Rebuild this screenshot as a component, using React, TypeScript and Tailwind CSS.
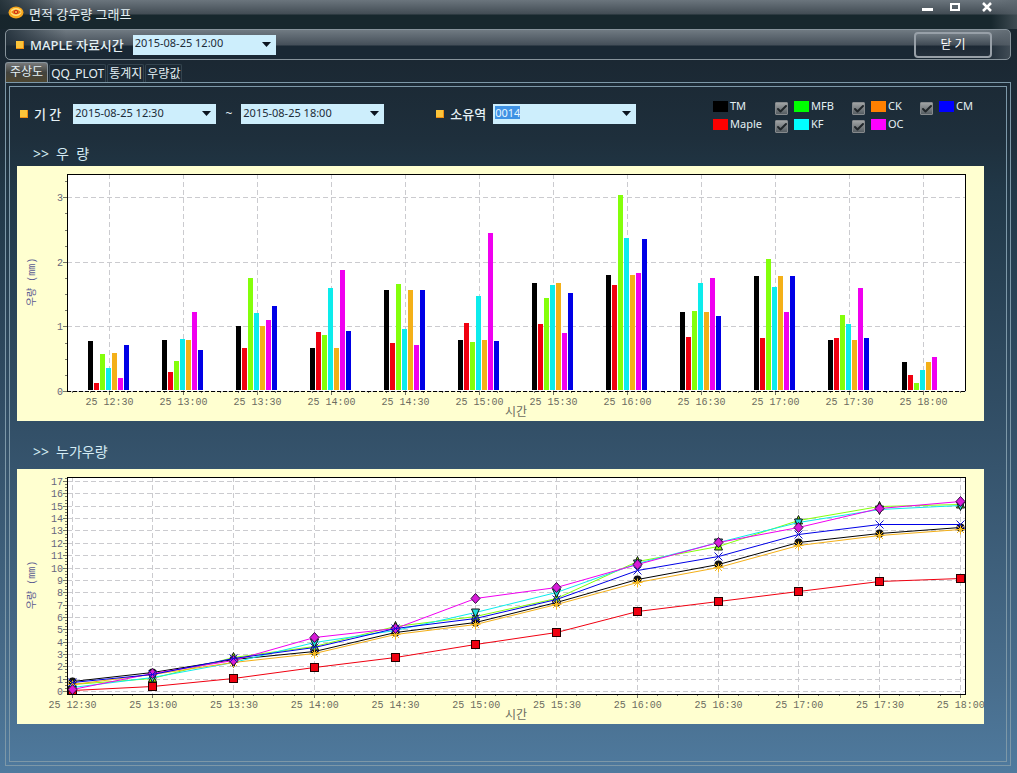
import { useState } from 'react'
import type { ReactNode } from 'react'
import { Check } from 'lucide-react'

type SeriesKey = 'TM' | 'Maple' | 'MFB' | 'KF' | 'CK' | 'OC' | 'CM'

interface Series {
  key: SeriesKey
  color: string
  values: number[]
}

const TIMES = [
  '12:30', '13:00', '13:30', '14:00', '14:30', '15:00',
  '15:30', '16:00', '16:30', '17:00', '17:30', '18:00',
]

const SERIES: Series[] = [
  { key: 'TM', color: '#000000', values: [0.77, 0.79, 1.0, 0.66, 1.56, 0.79, 1.67, 1.79, 1.22, 1.78, 0.79, 0.45] },
  { key: 'Maple', color: '#f00010', values: [0.12, 0.29, 0.66, 0.91, 0.74, 1.05, 1.04, 1.64, 0.84, 0.82, 0.82, 0.25] },
  { key: 'MFB', color: '#84ff0a', values: [0.57, 0.46, 1.75, 0.87, 1.65, 0.76, 1.44, 3.04, 1.24, 2.04, 1.18, 0.13] },
  { key: 'KF', color: '#0cecec', values: [0.35, 0.8, 1.21, 1.59, 0.96, 1.47, 1.64, 2.37, 1.67, 1.61, 1.04, 0.33] },
  { key: 'CK', color: '#f4b018', values: [0.59, 0.79, 1.0, 0.66, 1.57, 0.79, 1.67, 1.79, 1.22, 1.78, 0.79, 0.45] },
  { key: 'OC', color: '#f000f0', values: [0.2, 1.22, 1.1, 1.87, 0.71, 2.45, 0.9, 1.83, 1.75, 1.22, 1.59, 0.53] },
  { key: 'CM', color: '#0000e6', values: [0.71, 0.63, 1.31, 0.93, 1.56, 0.77, 1.52, 2.35, 1.16, 1.78, 0.82, 0] },
]

const LEGEND: { key: SeriesKey; swatch: string; toggle: boolean; place: string }[] = [
  { key: 'TM', swatch: 'bg-black', toggle: false, place: 'col-start-1 row-start-1' },
  { key: 'Maple', swatch: 'bg-[#ff0000]', toggle: false, place: 'col-start-1 row-start-2' },
  { key: 'MFB', swatch: 'bg-[#00ff00]', toggle: true, place: 'col-start-2 row-start-1' },
  { key: 'KF', swatch: 'bg-[#00ffff]', toggle: true, place: 'col-start-2 row-start-2' },
  { key: 'CK', swatch: 'bg-[#ff8000]', toggle: true, place: 'col-start-3 row-start-1' },
  { key: 'OC', swatch: 'bg-[#ff00ff]', toggle: true, place: 'col-start-3 row-start-2' },
  { key: 'CM', swatch: 'bg-[#0000ff]', toggle: true, place: 'col-start-4 row-start-1' },
]

const TABS = ['주상도', 'QQ_PLOT', '통계지', '우량값']

// Plot area inside the 967x255 chart canvas
const LEFT = 50
const RIGHT = 949
const TOP = 8
const BOTTOM = 225

function cumulative(values: number[]) {
  let sum = 0
  return values.map((v) => (sum += v))
}

function ChartFrame({
  name,
  xs,
  yZero,
  yUnit,
  yMax,
  children,
}: {
  name: string
  xs: number[]
  yZero: number
  yUnit: number
  yMax: number
  children: ReactNode
}) {
  const step = xs[1] - xs[0]
  const majors = Array.from({ length: yMax + 1 }, (_, i) => i)
  const yMinors = Array.from({ length: (yMax + 1) * 4 }, (_, i) => yZero - (i * yUnit) / 4).filter((y) => y > TOP)
  const xMinors = Array.from({ length: 56 }, (_, i) => xs[0] + ((i - 4) * step) / 4).filter((x) => x > LEFT && x < RIGHT)

  return (
    <svg viewBox="0 0 967 255" className="block h-auto w-full bg-[#ffffd0]" role="img" aria-label={name}>
      <rect x={LEFT} y={TOP} width={RIGHT - LEFT} height={BOTTOM - TOP} fill="#fff" />
      <g stroke="#cbcbcf" strokeDasharray="5 3" shapeRendering="crispEdges">
        {majors.map((v) => {
          const y = Math.round(yZero - v * yUnit) + 0.5
          return <line key={v} x1={LEFT} x2={RIGHT} y1={y} y2={y} />
        })}
        {xs.map((x) => (
          <line key={x} x1={Math.floor(x) + 0.5} x2={Math.floor(x) + 0.5} y1={TOP} y2={BOTTOM} />
        ))}
      </g>
      <g stroke="#77776a" shapeRendering="crispEdges">
        {yMinors.map((y) => (
          <line key={y} x1={LEFT - 2} x2={LEFT} y1={Math.round(y) + 0.5} y2={Math.round(y) + 0.5} />
        ))}
        {majors.map((v) => {
          const y = Math.round(yZero - v * yUnit) + 0.5
          return <line key={v} x1={LEFT - 4} x2={LEFT} y1={y} y2={y} />
        })}
        {xMinors.map((x) => (
          <line key={x} x1={Math.floor(x) + 0.5} x2={Math.floor(x) + 0.5} y1={BOTTOM} y2={BOTTOM + 2} />
        ))}
        {xs.map((x) => (
          <line key={x} x1={Math.floor(x) + 0.5} x2={Math.floor(x) + 0.5} y1={BOTTOM} y2={BOTTOM + 4} />
        ))}
      </g>
      {children}
      <g className="font-['Liberation_Mono','Noto_Sans_CJK_KR',monospace] text-[10px]">
        {majors.map((v) => (
          <text key={v} x={LEFT - 4} y={Math.round(yZero - v * yUnit) + 4} textAnchor="end" fill="#66667c">
            {v}
          </text>
        ))}
        {xs.map((x, i) => (
          <text key={x} x={x + 0.5} y={239} textAnchor="middle" fill="#6c6c60">
            {`25 ${TIMES[i]}`}
          </text>
        ))}
        <text x={15} y={116} textAnchor="middle" dominantBaseline="middle" transform="rotate(-90 15 116)" fill="#5a5a90">
          우량 (mm)
        </text>
        <text x={499} y={250} textAnchor="middle" fill="#6c6c60" className="text-[12px]">
          시간
        </text>
      </g>
    </svg>
  )
}

function RainfallBars({ visible }: { visible: Record<SeriesKey, boolean> }) {
  const xs = TIMES.map((_, i) => 92 + i * 74)
  return (
    <ChartFrame name="우량" xs={xs} yZero={225} yUnit={64.6} yMax={3}>
      <g shapeRendering="crispEdges">
        {SERIES.map((s, si) =>
          visible[s.key]
            ? s.values.map((v, i) => {
                const y = Math.round(225 - v * 64.6)
                return (
                  <rect key={`${s.key}-${i}`} x={xs[i] - 21 + si * 6} y={y} width={5} height={Math.max(0, 224 - y)} fill={s.color} />
                )
              })
            : null,
        )}
        <path d={`M${LEFT + 0.5} ${BOTTOM}V${TOP + 0.5}H${RIGHT - 0.5}V${BOTTOM}`} fill="none" stroke="#000" />
        <line x1={LEFT} x2={RIGHT} y1={BOTTOM + 0.5} y2={BOTTOM + 0.5} stroke="#000" strokeDasharray="4 2" />
      </g>
    </ChartFrame>
  )
}

function Marker({ kind, x, y }: { kind: SeriesKey; x: number; y: number }) {
  const at = `translate(${x} ${y})`
  switch (kind) {
    case 'TM':
      return <circle cx={x} cy={y} r={4} fill="#111" />
    case 'Maple':
      return <rect x={x - 4} y={y - 4} width={8} height={8} fill="#f00010" stroke="#200" />
    case 'MFB':
      return <path transform={at} d="M0-5L4 3.500H-4Z" fill="#84ff0a" stroke="#111" />
    case 'KF':
      return <path transform={at} d="M0 5L4-3.500H-4Z" fill="#20dede" stroke="#111" />
    case 'CK':
      return <path transform={at} d="M0-4V5M-5 0H5M-3.500-3.500L3.500 3.500M3.500-3.500L-3.500 3.500" stroke="#f4b820" />
    case 'OC':
      return <path transform={at} d="M0-5L4.500 0L0 5L-4.500 0Z" fill="#d81cd8" stroke="#301040" />
    case 'CM':
      return <path transform={at} d="M-4-4L4 4M4-4L-4 4" stroke="#1414c8" />
  }
}

function CumulativeLines({ visible }: { visible: Record<SeriesKey, boolean> }) {
  const xs = TIMES.map((_, i) => 55 + i * 80.75)
  return (
    <ChartFrame name="누가우량" xs={xs} yZero={222} yUnit={12.35} yMax={17}>
      <clipPath id="plot-area">
        <rect x={LEFT} y={TOP} width={RIGHT - LEFT} height={BOTTOM - TOP} />
      </clipPath>
      <g clipPath="url(#plot-area)">
        {SERIES.filter((s) => visible[s.key]).map((s) => {
          const points = cumulative(s.values).map((v, i) => [Math.floor(xs[i]) + 0.5, Math.round(222 - v * 12.35) + 0.5])
          return (
            <g key={s.key}>
              <polyline points={points.map((p) => p.join(',')).join(' ')} fill="none" stroke={s.color} />
              {points.map(([x, y], i) => (
                <Marker key={i} kind={s.key} x={x} y={y} />
              ))}
            </g>
          )
        })}
      </g>
      <rect
        x={LEFT + 0.5}
        y={TOP + 0.5}
        width={RIGHT - LEFT - 1}
        height={BOTTOM - TOP}
        fill="none"
        stroke="#000"
        shapeRendering="crispEdges"
      />
    </ChartFrame>
  )
}

function Arrow() {
  return (
    <svg width="9" height="5" viewBox="0 0 9 5" aria-hidden="true" className="pointer-events-none absolute top-[7px] right-[5px]">
      <path d="M0 0H9L4.500 5Z" fill="#0b1420" />
    </svg>
  )
}

function DateSelect({ id, label, value }: { id: string; label: string; value: string }) {
  return (
    <div className="relative">
      <select
        id={id}
        aria-label={label}
        defaultValue={value}
        className="block h-5 w-[143px] appearance-none bg-[#cdeefc] pb-[3px] pl-[2px] text-[11px] leading-4 text-[#1c2c38] outline-none"
      >
        <option>{value}</option>
      </select>
      <Arrow />
    </div>
  )
}

function Bullet() {
  return <span className="size-2 shrink-0 bg-[#fbc43a] shadow-[inset_-1px_-1px_0_#f08c10]" />
}

export default function App() {
  const [tab, setTab] = useState(TABS[0])
  const [basin, setBasin] = useState('0014')
  const [visible, setVisible] = useState<Record<SeriesKey, boolean>>({
    TM: true, Maple: true, MFB: true, KF: true, CK: true, OC: true, CM: true,
  })

  const toggle = (key: SeriesKey) => setVisible((v) => ({ ...v, [key]: !v[key] }))

  return (
    <div className="flex min-h-screen flex-col bg-[linear-gradient(to_bottom,#17252c_0%,#1b2833_8%,#1e2f3c_18%,#213848_25%,#335068_56%,#486d8c_88%,#4f7a9e_100%)] pb-[7px] font-['Noto_Sans','Noto_Sans_CJK_KR',sans-serif] text-[#e4f0f4]">
      {/* Title bar */}
      <header className="flex h-[29px] items-start bg-[linear-gradient(to_right,#17252ccc_0,transparent_60px),linear-gradient(to_left,#59636b99_0,transparent_26px),linear-gradient(to_bottom,#6b757d_0,#424c54_14px,#17272d_15px)] pr-[22px] pl-2">
        <svg width="16" height="13" viewBox="0 0 16 13" aria-hidden="true" className="mt-[6px] shrink-0">
          <ellipse cx="8" cy="6.500" rx="7.500" ry="6" fill="#f6a51c" />
          <ellipse cx="8" cy="6" rx="5.500" ry="4" fill="#ffe27a" />
          <path d="M3 6Q8 1 13 6Q8 11 3 6Z" fill="#ee7a18" />
          <circle cx="8" cy="6" r="2" fill="#c8201c" />
          <circle cx="8" cy="6" r="1" fill="#ffd84a" />
        </svg>
        <h1 className="mt-[5px] ml-[5px] text-[13px] leading-[18px]">면적 강우량 그래프</h1>
        <div className="ml-auto flex items-start gap-[14px] pt-px">
          <button type="button" aria-label="최소화" className="grid h-3 w-4 place-items-center">
            <svg width="11" height="10" viewBox="0 0 11 10">
              <path d="M0 6H11V9H0Z" fill="#fff" />
            </svg>
          </button>
          <button type="button" aria-label="최대화" className="grid h-3 w-3 place-items-center">
            <svg width="10" height="10" viewBox="0 0 10 10">
              <path d="M1 2H9V8H1Z" fill="none" stroke="#fff" strokeWidth="2" />
            </svg>
          </button>
          <button type="button" aria-label="닫기" className="ml-1 grid h-3 w-4 place-items-center">
            <svg width="10" height="10" viewBox="0 0 10 10">
              <path d="M1 1L9 9M9 1L1 9" stroke="#fff" strokeWidth="2.500" />
            </svg>
          </button>
        </div>
      </header>

      {/* Toolbar */}
      <div className="mr-[6px] ml-[5px] flex h-[31px] items-center rounded-[5px] border border-[#87939b] bg-[linear-gradient(to_right,#1a2833cc_0,transparent_60px),linear-gradient(to_left,#59636b99_0,transparent_26px),linear-gradient(to_bottom,#707a82_0,#454f59_15px,#1a2834_16px)] pr-[18px] pl-[10px]">
        <Bullet />
        <label htmlFor="maple-time" className="mr-[9px] ml-[6px] text-[13px] leading-5 font-medium whitespace-nowrap">
          MAPLE 자료시간
        </label>
        <DateSelect id="maple-time" label="MAPLE 자료시간" value="2015-08-25 12:00" />
        <button
          type="button"
          className="ml-auto h-[26px] w-[78px] rounded-[4px] border-2 border-[#98a0a8] bg-[linear-gradient(to_bottom,#707a82_0,#414b55_50%,#1c2834_55%,#24303c_100%)] text-[12px] leading-5 text-white"
        >
          닫 기
        </button>
      </div>

      {/* Tabs */}
      <div role="tablist" className="ml-[5px] flex h-[22px] items-end gap-px pt-[2px]">
        {TABS.map((name) => (
          <button
            key={name}
            type="button"
            role="tab"
            aria-selected={tab === name}
            onClick={() => setTab(name)}
            className={
              tab === name
                ? 'h-5 rounded-t-[3px] border border-b-0 border-[#87939b] bg-[linear-gradient(to_bottom,#77797a_0,#42433e_50%,#4e4630_100%)] px-1 pb-[2px] text-[12px] leading-4 whitespace-nowrap'
                : 'h-[18px] rounded-t-[2px] border border-b-0 border-[#34444f] px-px text-[12px] leading-4 whitespace-nowrap'
            }
          >
            {name}
          </button>
        ))}
      </div>

      {/* Double outlined tab page */}
      <div className="mr-[6px] ml-[5px] flex grow flex-col border border-[#7d98a8] p-[3px]">
        <main className="flex grow flex-col border border-[#7d98a8] pr-[22px] pb-9 pl-[7px]">
          <div className="flex h-[57px] items-start pt-[14px] pl-[3px]">
            <div className="mt-[3px] flex items-center">
              <Bullet />
              <span className="mr-3 ml-[6px] text-[13px] leading-5 font-medium whitespace-nowrap">기 간</span>
              <DateSelect id="date-from" label="기간 시작" value="2015-08-25 12:30" />
              <span className="w-[25px] text-center text-[12px] leading-5">~</span>
              <DateSelect id="date-to" label="기간 끝" value="2015-08-25 18:00" />
            </div>
            <div className="mt-[3px] ml-[52px] flex items-center">
              <Bullet />
              <label htmlFor="basin" className="mr-[7px] ml-[6px] text-[13px] leading-5 font-medium whitespace-nowrap">
                소유역
              </label>
              <div className="relative h-5 w-[143px] bg-[#cdeefc] pt-[2px] pl-[2px]">
                <input
                  id="basin"
                  type="text"
                  value={basin}
                  onChange={(e) => setBasin(e.target.value)}
                  className="block h-[13px] w-[25px] bg-[#3f92e4] text-[11px] leading-[13px] text-[#e8f6ff] outline-none"
                />
                <Arrow />
              </div>
            </div>
            <div className="mr-[10px] ml-auto grid grid-cols-[62px_77px_68px_54px] grid-rows-[18px_18px]">
              {LEGEND.map((item) => (
                <label key={item.key} className={`flex h-[13px] items-start ${item.place}`}>
                  {item.toggle && (
                    <span className="relative mt-[1px] mr-[6px] grid size-[13px] shrink-0 place-items-center">
                      <input
                        type="checkbox"
                        checked={visible[item.key]}
                        onChange={() => toggle(item.key)}
                        className="size-[13px] appearance-none rounded-[1px] border border-[#85898c] bg-[linear-gradient(to_bottom,#a0a3a4,#555d62)]"
                      />
                      {visible[item.key] && (
                        <Check size={12} strokeWidth={4} color="#20262a" aria-hidden="true" className="pointer-events-none absolute" />
                      )}
                    </span>
                  )}
                  <span className={`h-[11px] w-[15px] shrink-0 ${item.swatch}`} />
                  <span className="ml-[2px] text-[11px] leading-[10px]">{item.key}</span>
                </label>
              ))}
            </div>
          </div>

          <h2 className="flex gap-[7px] pb-[2px] pl-4 text-[14px] leading-5 text-[#d4ebf4]">
            <span>&gt;&gt;</span>
            <span className="whitespace-pre">{'우  량'}</span>
          </h2>
          <RainfallBars visible={visible} />
          <h2 className="flex gap-[7px] pt-[21px] pb-[7px] pl-4 text-[14px] leading-5 text-[#d4ebf4]">
            <span>&gt;&gt;</span>
            <span>누가우량</span>
          </h2>
          <CumulativeLines visible={visible} />
        </main>
      </div>
    </div>
  )
}
